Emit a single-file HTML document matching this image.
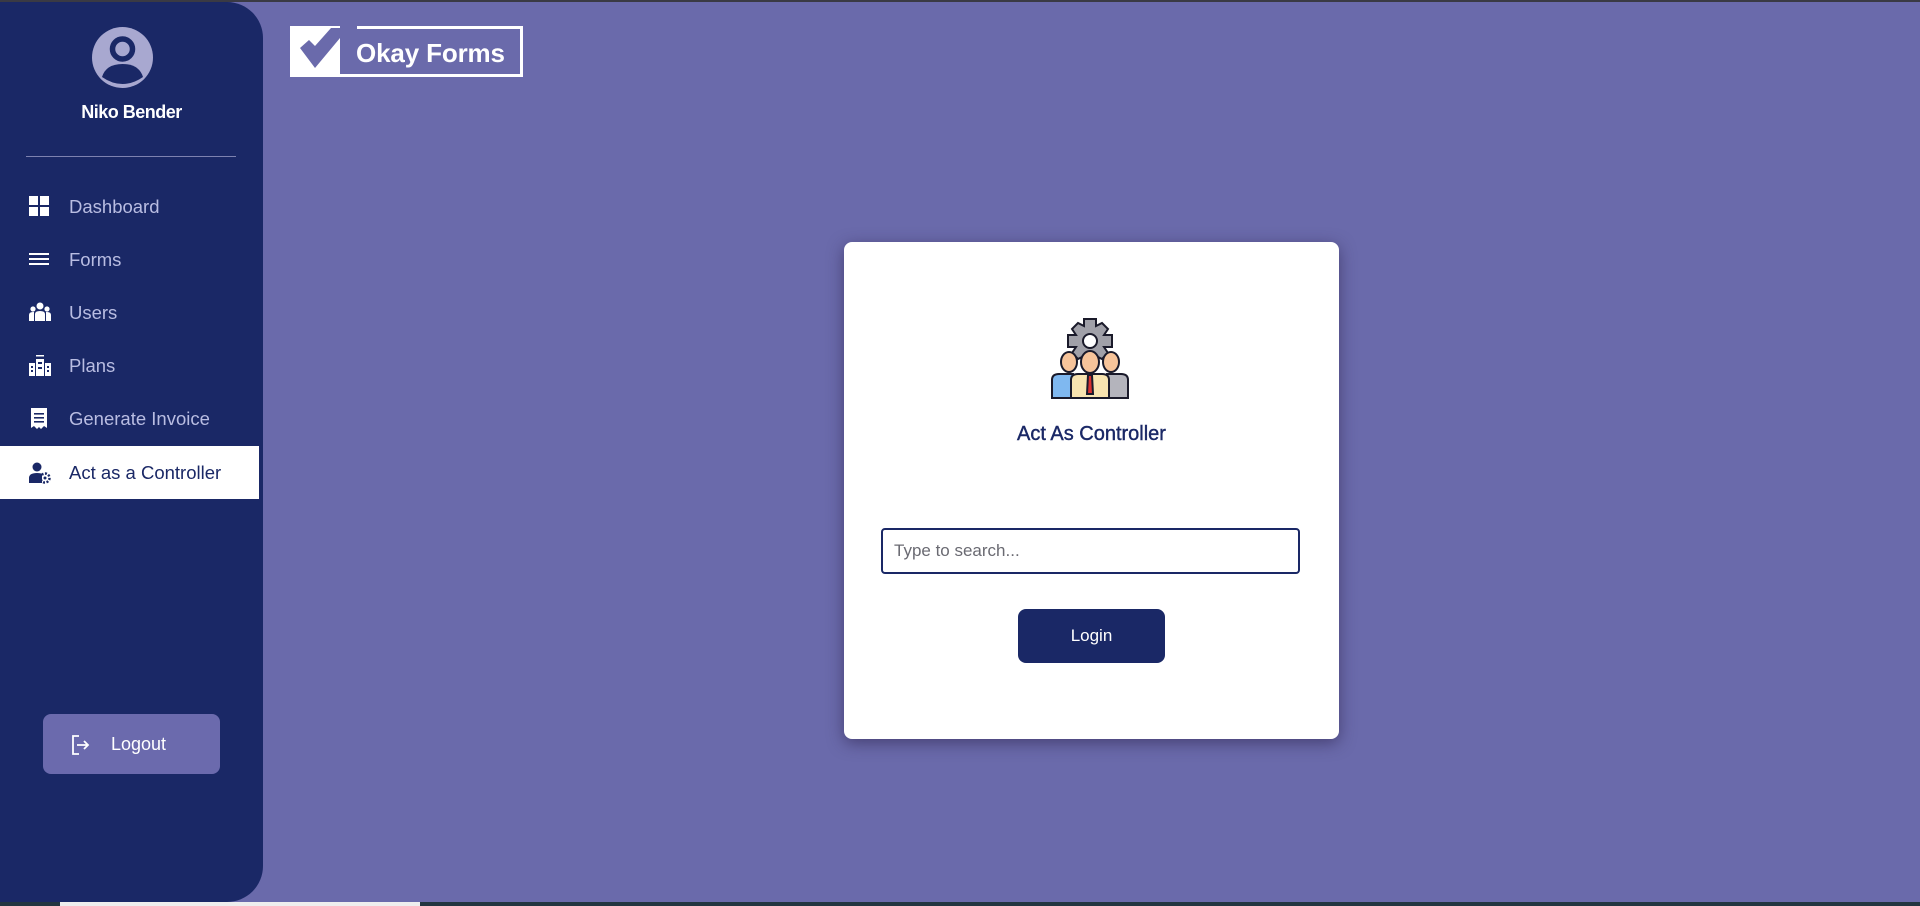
<!DOCTYPE html>
<html><head><meta charset="utf-8"><style>
*{box-sizing:border-box;margin:0;padding:0}
html,body{width:1920px;height:906px;overflow:hidden}
body{background:#6a6aab;font-family:"Liberation Sans",sans-serif;position:relative}
.topline{position:absolute;left:0;top:0;width:1920px;height:2px;background:#3a3a44}
.botline{position:absolute;left:0;bottom:0;width:1920px;height:4px;background:#223540}
.botline i{position:absolute;left:60px;top:0;width:360px;height:4px;background:#eee}
.side{position:absolute;left:0;top:2px;width:263px;height:900px;background:#1a2866;border-radius:0 36px 36px 0}
.av{position:absolute;left:92px;top:25px;width:61px;height:61px;border-radius:50%;background:#a8a8d0;overflow:hidden}
.name{position:absolute;left:0;width:263px;top:100px;text-align:center;color:#fff;font-weight:bold;font-size:18px;letter-spacing:-0.5px}
.div{position:absolute;left:26px;top:154px;width:210px;height:1px;background:#7d82b0}
.item{position:absolute;left:0;width:259px;height:53px;color:#b9bde2;font-size:18.5px;line-height:53px}
.item span{position:absolute;left:69px}
.item svg{position:absolute;left:29px;top:16px}
.item.act{background:#fff;color:#1a2866}
.logout{position:absolute;left:43px;top:712px;width:177px;height:60px;background:#6b6aad;border-radius:8px;color:#fff;font-size:18px;line-height:60px}
.logout span{position:absolute;left:68px}
.card{position:absolute;left:844px;top:242px;width:495px;height:497px;background:#fff;border-radius:8px;box-shadow:0 4px 16px rgba(40,30,70,.55)}
.title{position:absolute;left:0;width:495px;top:181px;text-align:center;color:#1a2866;font-size:20px;-webkit-text-stroke:0.4px #1a2866}
.inp{position:absolute;left:37px;top:286px;width:419px;height:46px;border:2px solid #1a2866;border-radius:4px;color:#6a6a72;font-size:17px;line-height:42px;padding-left:11px}
.btn{position:absolute;left:174px;top:367px;width:147px;height:54px;background:#1a2866;border-radius:8px;color:#fff;font-size:17px;line-height:54px;text-align:center}
</style></head><body>
<div class="topline"></div>
<div class="side">
 <div class="av"><svg width="61" height="61" viewBox="0 0 61 61"><circle cx="30.5" cy="22" r="10" fill="none" stroke="#1a2866" stroke-width="5.5"/><path d="M10 50 Q14 37 30.5 37 Q47 37 51 50 Q41 57 30.5 57 Q20 57 10 50Z" fill="#1a2866"/></svg></div>
 <div class="name">Niko Bender</div>
 <div class="div"></div>
 <div class="item" style="top:178px"><svg width="20" height="20" viewBox="0 0 20 20" fill="#fff"><rect x="0" y="0" width="9" height="9"/><rect x="11" y="0" width="9" height="9"/><rect x="0" y="11" width="9" height="9"/><rect x="11" y="11" width="9" height="9"/></svg><span>Dashboard</span></div>
 <div class="item" style="top:231px"><svg width="20" height="20" viewBox="0 0 20 20" fill="#fff"><rect y="4" width="20" height="2"/><rect y="9" width="20" height="2"/><rect y="14" width="20" height="2"/></svg><span>Forms</span></div>
 <div class="item" style="top:284px"><svg width="22" height="20" viewBox="0 0 22 20" fill="#fff"><circle cx="11" cy="4" r="3.5"/><circle cx="4" cy="7" r="2.6"/><circle cx="18" cy="7" r="2.6"/><path d="M6 19V12Q6 9 11 9Q16 9 16 12V19Z"/><path d="M0 19V13Q0 10 4 10H5V19Z"/><path d="M22 19V13Q22 10 18 10H17V19Z"/></svg><span>Users</span></div>
 <div class="item" style="top:337px"><svg width="22" height="22" viewBox="0 0 22 22" fill="#fff"><rect x="7" y="0" width="8" height="1.5"/><rect x="7" y="4" width="8" height="17"/><rect x="0" y="8" width="6" height="13"/><rect x="16" y="8" width="6" height="13"/><g fill="#1a2866"><rect x="9" y="7" width="4" height="2"/><rect x="9" y="12" width="4" height="2"/><rect x="2" y="11" width="2" height="2"/><rect x="2" y="15" width="2" height="2"/><rect x="18" y="11" width="2" height="2"/><rect x="18" y="15" width="2" height="2"/></g></svg><span>Plans</span></div>
 <div class="item" style="top:390px"><svg width="20" height="22" viewBox="0 0 20 22" fill="#fff"><path d="M2 0H18V20L15 18L12 21L10 19L8 21L5 18L2 20Z"/><g fill="#1a2866"><rect x="5" y="5" width="10" height="1.6"/><rect x="5" y="9" width="10" height="1.6"/><rect x="5" y="13" width="10" height="1.6"/></g></svg><span>Generate Invoice</span></div>
 <div class="item act" style="top:444px"><svg width="22" height="22" viewBox="0 0 22 22" fill="#1a2866"><circle cx="8" cy="5" r="4.5"/><path d="M0 21V16Q0 11 8 11Q12 11 13 12V21Z"/><circle cx="16" cy="16" r="4.5" fill="none" stroke="#1a2866" stroke-width="2.5" stroke-dasharray="2 1.5"/><circle cx="16" cy="16" r="1.5"/></svg><span>Act as a Controller</span></div>
 <div class="logout"><svg style="position:absolute;left:29px;top:21px" width="18" height="20" viewBox="0 0 18 20" fill="none" stroke="#fff" stroke-width="1.8"><path d="M7 1H1V19H7"/><path d="M5 10H16M12 6L16 10L12 14"/></svg><span>Logout</span></div>
</div>
<svg style="position:absolute;left:290px;top:26px" width="233" height="51" viewBox="0 0 233 51">
 <path d="M0 0H50V51H0Z" fill="#fff"/>
 <path d="M10 22L19 14L25 20L41 2H50V12L25 42Z" fill="#6a6aab"/>
 <path d="M67 1.5H231.5V49.5H50" fill="none" stroke="#fff" stroke-width="3"/>
 <text x="66" y="36" fill="#fff" font-family="Liberation Sans,sans-serif" font-weight="bold" font-size="26" letter-spacing="-1" textLength="148">Okay Forms</text>
</svg>
<div class="card">
 <svg style="position:absolute;left:207px;top:76px" width="82" height="82" viewBox="0 0 82 82">
  <g stroke="#1a1a2a" stroke-width="2">
  <path d="M33 1H45V8L51 5L57 11L53 17H61V29H53L57 35L51 41L45 38V45H33V38L27 41L21 35L25 29H17V17H25L21 11L27 5L33 8Z" fill="#a0a0a8"/>
  <circle cx="39" cy="23" r="7" fill="#fff"/>
  <path d="M1 80V62Q1 56 8 56H22V80Z" fill="#7fb8f0"/>
  <path d="M56 80V56H70Q77 56 77 62V80Z" fill="#b4b4bc"/>
  <ellipse cx="18" cy="44" rx="8" ry="10" fill="#f7c49a"/>
  <ellipse cx="60" cy="44" rx="8" ry="10" fill="#f7c49a"/>
  <path d="M20 80V62Q20 56 27 56H51Q58 56 58 62V80Z" fill="#f8e4b0"/>
  <ellipse cx="39" cy="44" rx="9" ry="11" fill="#f7c49a"/>
  <path d="M37 57H41L42 76H36Z" fill="#d83030"/>
  </g>
 </svg>
 <div class="title">Act As Controller</div>
 <div class="inp">Type to search...</div>
 <div class="btn">Login</div>
</div>
<div class="botline"><i></i></div>
</body></html>
